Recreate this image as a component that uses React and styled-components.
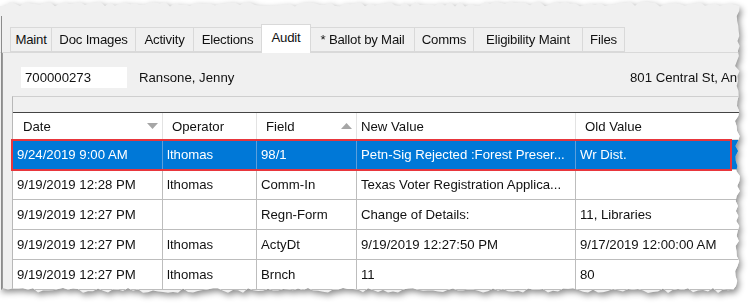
import React from "react";
import styled, { createGlobalStyle } from "styled-components";

const Global = createGlobalStyle`
  html, body { margin: 0; padding: 0; background: #ffffff; }
  body { width: 751px; height: 308px; overflow: hidden; font-family: "Liberation Sans", Arial, sans-serif; }
`;

function makeClip() {
  let s = 17;
  const r = () => {
    s = (s * 9301 + 49297) % 233280;
    return s / 233280;
  };
  const pts = ["0px 3px"];
  for (let x = 0; x <= 732; x += 5) pts.push(`${x}px ${(1.5 + r() * 5).toFixed(1)}px`);
  for (let y = 6; y <= 288; y += 5) pts.push(`${(735 + r() * 5).toFixed(1)}px ${y}px`);
  for (let x = 733; x >= 0; x -= 5) pts.push(`${x}px ${(288 + r() * 5).toFixed(1)}px`);
  pts.push("0px 291px");
  return `polygon(${pts.join(", ")})`;
}
const CLIP = makeClip();

const Frame = styled.div`
  width: 751px;
  height: 308px;
  filter: drop-shadow(2px 3px 3px rgba(0, 0, 0, 0.45));
`;

const Sheet = styled.div`
  position: relative;
  width: 751px;
  height: 308px;
  box-sizing: border-box;
  padding-top: 24px;
  background: #f0f0f0;
  clip-path: ${CLIP};
  overflow: hidden;
  font-size: 13.2px;
  color: #111;
`;

const LeftEdge = styled.div`
  position: absolute;
  left: 1px;
  top: 16px;
  bottom: 0;
  width: 1px;
  background: #8c8c8c;
`;

const TabStrip = styled.div`
  display: flex;
  align-items: flex-end;
  height: 29px;
  box-sizing: border-box;
  padding-left: 10px;
  border-bottom: 1px solid #d9d9d9;
`;

const Tab = styled.div`
  position: relative;
  box-sizing: border-box;
  width: ${(p) => p.$w}px;
  height: ${(p) => (p.$active ? 29 : 25)}px;
  margin-bottom: ${(p) => (p.$active ? -1 : 0)}px;
  margin-left: -1px;
  z-index: ${(p) => (p.$active ? 1 : 0)};
  display: flex;
  align-items: center;
  justify-content: center;
  padding-bottom: ${(p) => (p.$active ? 4 : 0)}px;
  background: ${(p) => (p.$active ? "#ffffff" : "#f0f0f0")};
  border: 1px solid #d9d9d9;
  border-bottom: ${(p) => (p.$active ? "none" : "1px solid #d9d9d9")};
  white-space: nowrap;
  letter-spacing: -0.2px;
  &:first-child { margin-left: 0; }
`;

const Page = styled.div`
  margin-left: 2px;
  border-left: 1px solid #9a9a9a;
  padding: 14px 0 0 0;
  width: 800px;
`;

const InfoRow = styled.div`
  display: grid;
  grid-template-columns: 106px 479px auto;
  column-gap: 12px;
  align-items: center;
  padding-left: 18px;
  height: 21px;
`;

const IdBox = styled.div`
  height: 21px;
  background: #ffffff;
  display: flex;
  align-items: center;
  padding-left: 4px;
  box-sizing: border-box;
`;

const Plain = styled.div`
  white-space: nowrap;
`;

const GridArea = styled.div`
  margin: 8px 0 0 9px;
  border-top: 1px solid #cfcfcf;
  border-left: 1px solid #b8b8b8;
`;

const GroupBar = styled.div`
  height: 15px;
  background: #f0f0f0;
  border-bottom: 1px solid #444;
`;

const Row = styled.div`
  display: grid;
  grid-template-columns: 150px 94px 100px 219px 220px;
  height: ${(p) => (p.$head ? 27 : 30)}px;
  box-sizing: border-box;
  background: ${(p) => (p.$sel ? "#0078d7" : "#ffffff")};
  color: ${(p) => (p.$sel ? "#ffffff" : "#111")};
  border-bottom: 1px solid ${(p) => (p.$head ? "#dcdcdc" : "#bdbdbd")};
`;

const Cell = styled.div`
  position: relative;
  display: flex;
  align-items: center;
  box-sizing: border-box;
  padding-left: ${(p) => p.$pad}px;
  border-right: 1px solid ${(p) => p.$line};
  white-space: nowrap;
  overflow: hidden;
`;

const SortArrow = styled.svg`
  position: absolute;
  right: 4px;
  top: 50%;
  margin-top: -3px;
`;

const Highlight = styled.div`
  position: absolute;
  left: 11px;
  top: 139px;
  width: 721px;
  height: 32px;
  box-sizing: border-box;
  border: 2px solid #e8363c;
  pointer-events: none;
`;

const tabs = [
  ["Maint", 42],
  ["Doc Images", 85],
  ["Activity", 59],
  ["Elections", 69],
  ["Audit", 50, true],
  ["* Ballot by Mail", 105],
  ["Comms", 60],
  ["Eligibility Maint", 110],
  ["Files", 43],
];

const heads = [
  { t: "Date", pad: 10, sort: "down" },
  { t: "Operator", pad: 9 },
  { t: "Field", pad: 9, sort: "up" },
  { t: "New Value", pad: 4 },
  { t: "Old Value", pad: 9 },
];

const rows = [
  ["9/24/2019 9:00 AM", "lthomas", "98/1", "Petn-Sig Rejected :Forest Preser...", "Wr Dist."],
  ["9/19/2019 12:28 PM", "lthomas", "Comm-In", "Texas Voter Registration Applica...", ""],
  ["9/19/2019 12:27 PM", "", "Regn-Form", "Change of Details:", "11, Libraries"],
  ["9/19/2019 12:27 PM", "lthomas", "ActyDt", "9/19/2019 12:27:50 PM", "9/17/2019 12:00:00 AM"],
  ["9/19/2019 12:27 PM", "lthomas", "Brnch", "11", "80"],
];

function Arrow({ dir }) {
  return (
    <SortArrow width="11" height="6" viewBox="0 0 11 6">
      {dir === "down" ? (
        <polygon points="0,0 11,0 5.5,6" fill="#a6a6a6" />
      ) : (
        <polygon points="0,6 11,6 5.5,0" fill="#a6a6a6" />
      )}
    </SortArrow>
  );
}

export default function App() {
  return (
    <>
      <Global />
      <Frame>
        <Sheet>
          <LeftEdge />
          <TabStrip>
            {tabs.map(([label, w, active]) => (
              <Tab key={label} $w={w} $active={active}>
                {label}
              </Tab>
            ))}
          </TabStrip>
          <Page>
            <InfoRow>
              <IdBox>700000273</IdBox>
              <Plain>Ransone, Jenny</Plain>
              <Plain>801 Central St, An</Plain>
            </InfoRow>
            <GridArea>
              <GroupBar />
              <Row $head>
                {heads.map((h) => (
                  <Cell key={h.t} $pad={h.pad} $line="#e3e3e3">
                    {h.t}
                    {h.sort && <Arrow dir={h.sort} />}
                  </Cell>
                ))}
              </Row>
              {rows.map((r, i) => (
                <Row key={i} $sel={i === 0}>
                  {r.map((c, j) => (
                    <Cell key={j} $pad={4} $line={i === 0 ? "#5c9fdc" : "#bdbdbd"}>
                      {c}
                    </Cell>
                  ))}
                </Row>
              ))}
            </GridArea>
          </Page>
          <Highlight />
        </Sheet>
      </Frame>
    </>
  );
}
